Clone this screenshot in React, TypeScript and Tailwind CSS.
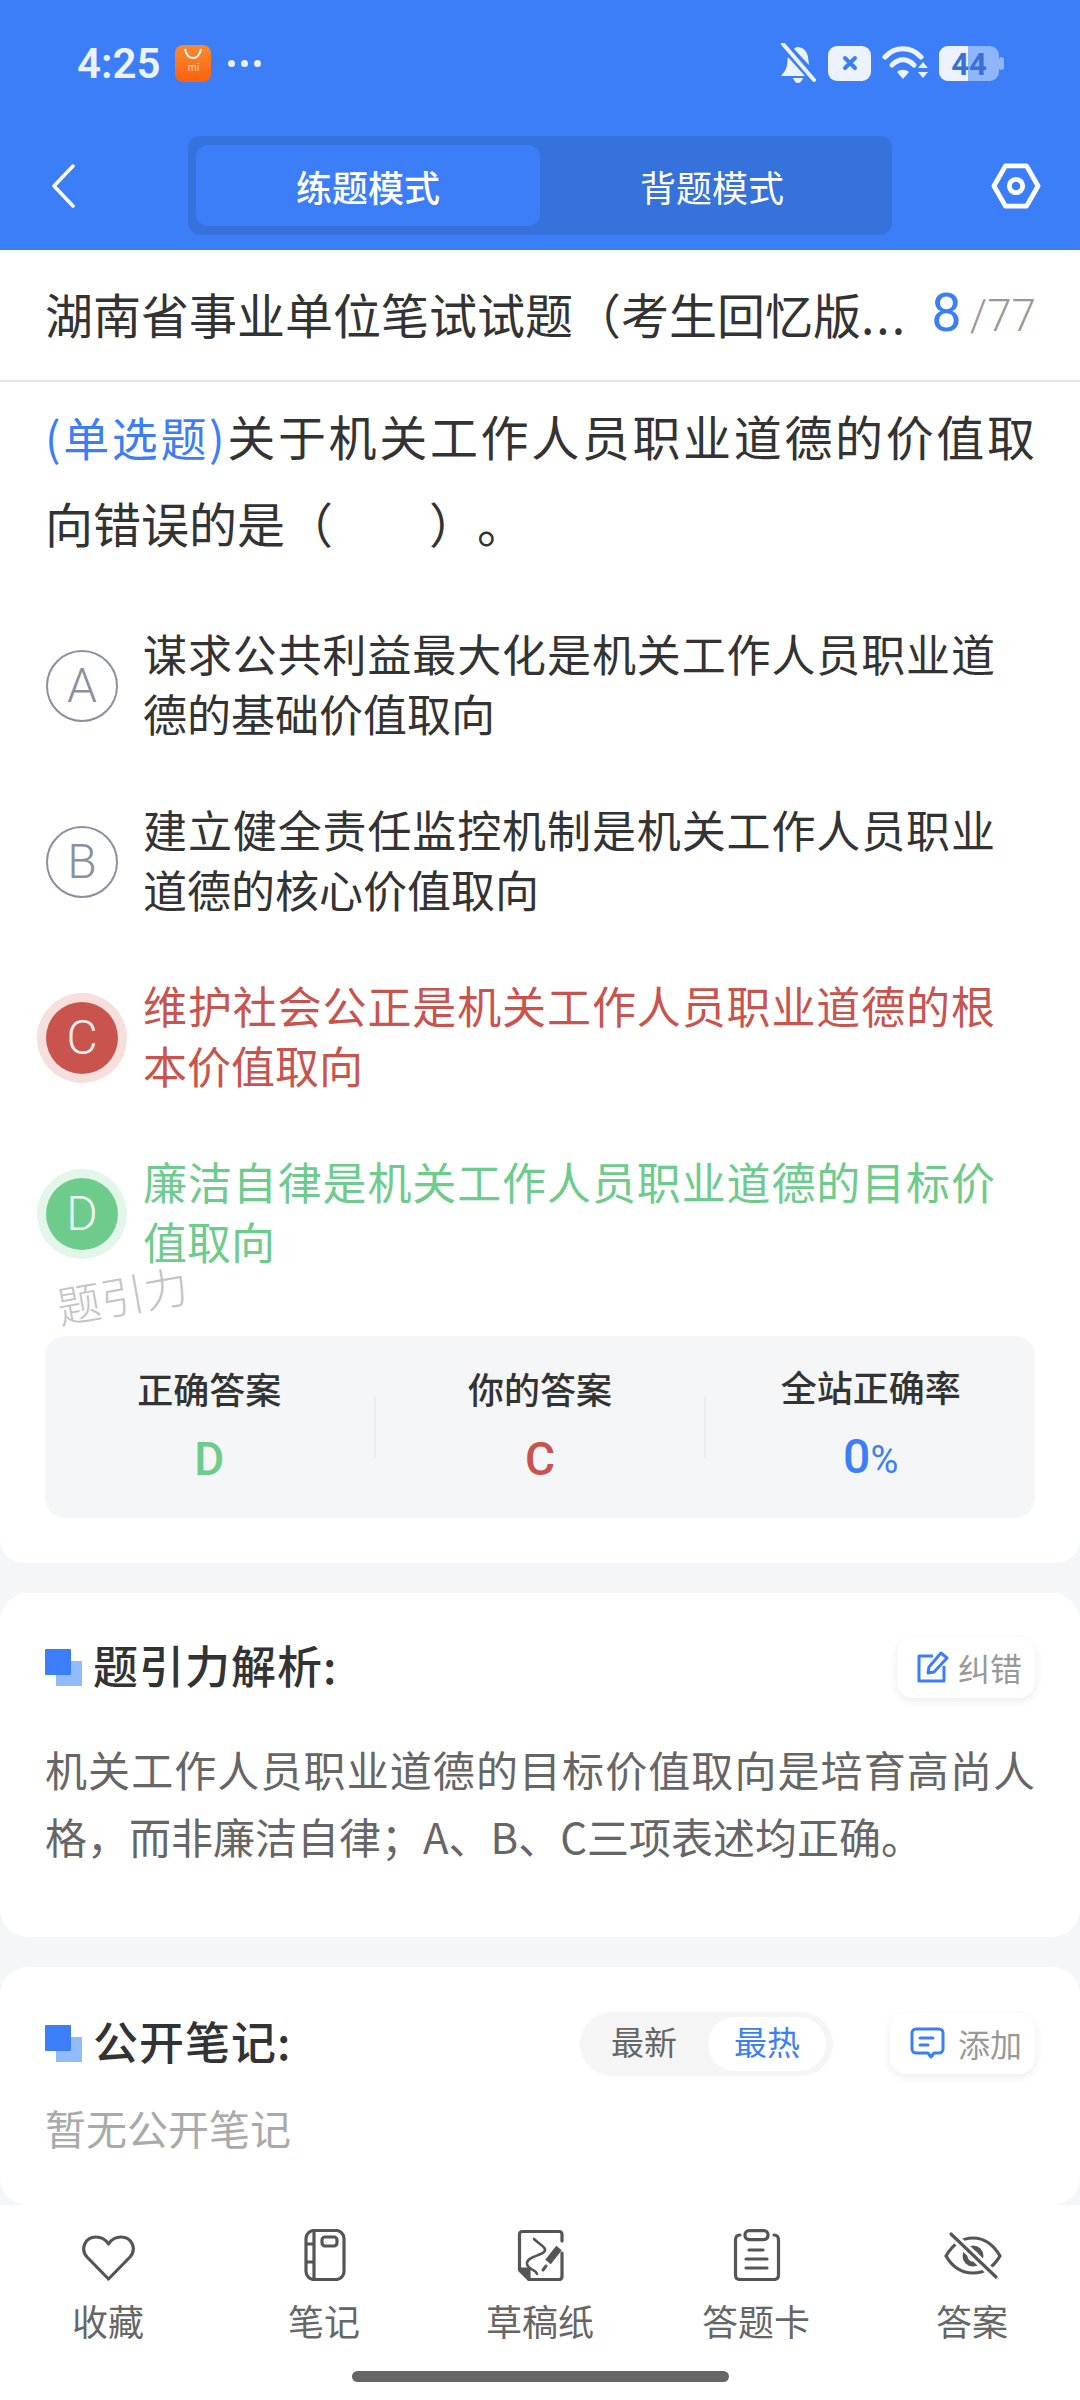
const optionRows = [
  { letter: "A", lines: "谋求公共利益最大化是机关工作人员职业道德的基础价值取向", state: "idle" },
  { letter: "B", lines: "建立健全责任监控机制是机关工作人员职业道德的核心价值取向", state: "idle" },
  { letter: "C", lines: "维护社会公正是机关工作人员职业道德的根本价值取向", state: "wrong" },
  { letter: "D", lines: "廉洁自律是机关工作人员职业道德的目标价值取向", state: "right" },
] as const;

function SectionMark() {
  return (
    <svg width="37" height="37" viewBox="0 0 37 37" className="shrink-0">
      <rect x="11" y="12" width="26" height="25" fill="#90bcfb" />
      <rect x="0" y="0" width="26" height="26" rx="1" fill="#3b7ef8" />
    </svg>
  );
}

function BellOffIcon() {
  return (
    <svg width="38" height="40" viewBox="0 0 38 40" fill="#ecf2ff">
      <path d="M18 4c6 0 10 4 11 10l1 8-15-16c1-1 2-2 3-2zM9 14l17 19H2c2-3 5-5 6-11z" />
      <path d="M14 35h10c-1 3-3 5-5 5s-4-2-5-5z" />
      <path d="M4 1l31 36" stroke="#ecf2ff" strokeWidth="4" strokeLinecap="round" />
    </svg>
  );
}

function WifiIcon() {
  return (
    <svg width="46" height="36" viewBox="0 0 46 36" fill="none" stroke="#ecf2ff" strokeWidth="5" strokeLinecap="round">
      <path d="M3 12C13 1 29 1 39 12" />
      <path d="M10 20c7-7 15-7 22 0" />
      <path d="M15 27l6 7 6-7c-3-3-9-3-12 0z" fill="#ecf2ff" stroke="none" />
      <path d="M36 23l5-6 5 6zM36 27l5 6 5-6z" fill="#ecf2ff" stroke="none" />
    </svg>
  );
}

function BatteryIcon() {
  return (
    <svg width="65" height="35" viewBox="0 0 65 35">
      <rect x="0" y="0" width="60" height="35" rx="9" fill="#8fb5fb" />
      <rect x="60" y="11" width="5" height="13" rx="2.5" fill="#8fb5fb" />
      <path d="M9 0h20v35H9a9 9 0 0 1-9-9V9a9 9 0 0 1 9-9z" fill="#ecf2ff" />
      <text x="30" y="29" textAnchor="middle" fontSize="31" fontWeight="700" fontFamily="Roboto, sans-serif" fill="#3a70d6">
        44
      </text>
    </svg>
  );
}

function EditIcon() {
  return (
    <svg width="32" height="32" viewBox="0 0 32 32" fill="none" stroke="#3b7ef8" strokeWidth="3" strokeLinejoin="round">
      <path d="M16 5H2v25h25V15" />
      <path d="M11 22l1-6L24 2l6 5-13 14z" />
    </svg>
  );
}

function CommentIcon() {
  return (
    <svg width="35" height="32" viewBox="0 0 35 32" fill="none" stroke="#3b7ef8" strokeWidth="3" strokeLinecap="round" strokeLinejoin="round">
      <path d="M6 2h23a4 4 0 0 1 4 4v16a4 4 0 0 1-4 4h-5l-3 4-3-4H6a4 4 0 0 1-4-4V6a4 4 0 0 1 4-4z" />
      <path d="M10 11h13M10 18h8" />
    </svg>
  );
}

function HeartIcon() {
  return (
    <svg width="60" height="52" viewBox="0 0 60 52" fill="none" stroke="#555" strokeWidth="3.2" strokeLinejoin="round">
      <path d="M30.5 50L9 28C2 20 7 8 18 8c6 0 10 3 12.500 7C33 11 37 8 43 8c11 0 16 12 9 20z" />
    </svg>
  );
}

function NotebookIcon() {
  return (
    <svg width="60" height="52" viewBox="0 0 60 52" fill="none" stroke="#555" strokeWidth="3.2">
      <rect x="12" y="1.500" width="38" height="49" rx="8" />
      <path d="M20 2v48M12 15h8M12 33h8" />
      <rect x="28" y="8" width="15" height="9" rx="3" />
    </svg>
  );
}

function DraftIcon() {
  return (
    <svg width="60" height="52" viewBox="0 0 60 52" fill="none" stroke="#555" strokeWidth="3.2" strokeLinejoin="round" strokeLinecap="round">
      <path d="M52 24v23q0 3.500-3 3.500H19L9.500 41V5.500q0-3 3-3H49q3 0 3 3V12" />
      <path d="M10 40h9v10z" fill="#555" />
      <path d="M24 10c6 6 14 9 10 13s-18 5-17 12c1 6 9 5 10 10" strokeWidth="2.600" />
      <path d="M49 19L38 33" strokeWidth="7" strokeLinecap="butt" />
      <path d="M36 37l-3 4" strokeWidth="3" />
    </svg>
  );
}

function ClipboardIcon() {
  return (
    <svg width="60" height="52" viewBox="0 0 60 52" fill="none" stroke="#555" strokeWidth="3.2" strokeLinecap="round">
      <path d="M14 6q-4.500 0-4.500 5v35q0 4.500 4.500 4.500h34q4.500 0 4.500-4.500V11q0-5-4.500-5" />
      <rect x="19" y="1.600" width="23" height="9" rx="4" />
      <path d="M23 21h14M20 30h21M20 39h21" />
    </svg>
  );
}

function EyeOffIcon() {
  return (
    <svg width="60" height="52" viewBox="0 0 60 52" fill="none" stroke="#555" strokeWidth="3.2" strokeLinecap="round">
      <path d="M4 27C11 15 21 9 31 9s20 6 27 18c-7 12-17 17-27 17S11 39 4 27z" />
      <circle cx="31" cy="27" r="8" strokeWidth="5" />
      <path d="M9 5l45 43" stroke="#fff" strokeWidth="9" />
      <path d="M9 5l45 43" />
    </svg>
  );
}

const bottomTabs = [
  { label: "收藏", icon: <HeartIcon /> },
  { label: "笔记", icon: <NotebookIcon /> },
  { label: "草稿纸", icon: <DraftIcon /> },
  { label: "答题卡", icon: <ClipboardIcon /> },
  { label: "答案", icon: <EyeOffIcon /> },
];

function OptionRow({ letter, lines, state }: (typeof optionRows)[number]) {
  const circleClass =
    state === "wrong"
      ? "bg-[#c9534d] text-[#fbeeee] ring-[9px] ring-[#f7dfdd]"
      : state === "right"
        ? "bg-[#6dcb8c] text-[#eefbf2] ring-[9px] ring-[#e3f6ea]"
        : "border-2 border-[#8b8fa0] text-[#8b8fa0]";
  const textClass =
    state === "wrong" ? "text-[#c9534d]" : state === "right" ? "text-[#6dcb8c]" : "text-[#333]";

  return (
    <div className="flex h-[120px] items-center gap-[25px]">
      <div
        className={`flex h-[72px] w-[72px] shrink-0 items-center justify-center rounded-full font-['Roboto',sans-serif] text-[48px] font-light ${circleClass}`}
      >
        {letter}
      </div>
      <p className={`-mt-[6px] w-[852px] text-justify text-[44px] leading-[60px] ${textClass}`}>{lines}</p>
    </div>
  );
}

export default function App() {
  return (
    <div className="h-[2400px] w-[1080px] overflow-hidden bg-[#f4f6f8] font-['Noto_Sans_CJK_SC','Noto_Sans',sans-serif] text-[#333]">
      <header className="h-[250px] bg-[#3b7ef8]">
        <div className="flex h-[126px] items-center justify-between pl-[77px] pr-[76px]">
          <div className="flex items-center gap-[15px]">
            <span className="font-['Roboto',sans-serif] text-[42px] font-semibold text-[#ecf2ff]">4:25</span>
            <div className="flex h-[37px] w-[36px] flex-col items-center rounded-[8px] bg-gradient-to-b from-[#fb8a2e] to-[#fb5f0c]">
              <svg width="20" height="12" viewBox="0 0 20 12" fill="none" className="mt-[3px]">
                <path d="M2 1c2 12 14 12 16 0" stroke="#fff" strokeWidth="2" />
              </svg>
              <span className="mt-[1px] text-[10px] leading-[12px] text-[#ffd9bd]">mi</span>
            </div>
            <div className="ml-[2px] flex gap-[6px]">
              <span className="h-[7px] w-[7px] rounded-full bg-[#ecf2ff]" />
              <span className="h-[7px] w-[7px] rounded-full bg-[#ecf2ff]" />
              <span className="h-[7px] w-[7px] rounded-full bg-[#ecf2ff]" />
            </div>
          </div>
          <div className="flex items-center gap-[11px]">
            <BellOffIcon />
            <div className="flex h-[35px] w-[43px] items-center justify-center rounded-[9px] bg-[#ecf2ff]">
              <svg width="18" height="18" viewBox="0 0 18 18" stroke="#3b7ef8" strokeWidth="4" strokeLinecap="round">
                <path d="M4 4l10 10M14 4L4 14" />
              </svg>
            </div>
            <WifiIcon />
            <BatteryIcon />
          </div>
        </div>

        <div className="flex h-[124px] items-center pb-[5px] pl-[50px] pr-[39px]">
          <svg width="26" height="44" viewBox="0 0 26 44" fill="none" stroke="#fff" strokeWidth="3.500" strokeLinecap="round" strokeLinejoin="round">
            <path d="M23 2L4 22l19 20" />
          </svg>
          <div className="ml-[112px] flex h-[99px] w-[704px] items-center rounded-[12px] bg-[#3672dc] pl-[8px] text-[36px] font-medium text-white">
            <div className="flex h-[81px] w-[344px] items-center justify-center rounded-[12px] bg-[#3b7ef8]">练题模式</div>
            <div className="flex h-[81px] w-[344px] items-center justify-center font-normal">背题模式</div>
          </div>
          <svg width="50" height="46" viewBox="0 0 52 48" fill="none" stroke="#fff" strokeWidth="5" strokeLinejoin="round" className="ml-auto">
            <path d="M15 3h22l12 21-12 21H15L3 24z" />
            <circle cx="26" cy="24" r="7" />
          </svg>
        </div>
      </header>

      <section className="rounded-b-[24px] bg-white pb-[45px]">
        <div className="flex h-[132px] items-center justify-between border-b-2 border-[#e5e5e5] pb-[5px] pl-[45px] pr-[44px]">
          <span className="whitespace-nowrap text-[48px] text-[#333]">
            湖南省事业单位笔试试题（考生回忆版<span className="tracking-[2px]">...</span>
          </span>
          <span className="flex items-baseline whitespace-nowrap">
            <span className="font-['Roboto',sans-serif] text-[54px] text-[#3b7ef8]">8</span>
            <span className="ml-[8px] font-['Roboto',sans-serif] text-[44px] font-light text-[#999]">/77</span>
          </span>
        </div>

        <div className="px-[45px] pt-[10px]">
          <p className="text-[48px] leading-[87px] [text-spacing-trim:space-all]">
            <span className="block text-justify [text-align-last:justify]">
              <span className="text-[46px] leading-none text-[#3b7ef8]">(单选题)</span>
              关于机关工作人员职业道德的价值取
            </span>
            <span className="block">向错误的是（{"\u3000\u3000"}）。</span>
          </p>
        </div>

        <div className="relative mt-[60px] pl-[46px]">
          <div className="flex flex-col gap-[56px]">
            {optionRows.map((option) => (
              <OptionRow key={option.letter} {...option} />
            ))}
          </div>
          <span className="absolute left-[56px] top-[640px] -rotate-[10deg] text-[44px] font-light leading-[56px] text-[#c4c4c4]">
            题引力
          </span>
        </div>

        <div className="mx-[45px] mt-[62px] flex h-[182px] items-center rounded-[20px] bg-[#f4f6f8]">
          <div className="flex flex-1 flex-col items-center gap-[21px] pb-[8px]">
            <span className="text-[36px] font-medium leading-[50px]">正确答案</span>
            <span className="font-['Roboto',sans-serif] text-[46px] font-medium leading-[50px] text-[#6dcb8c]">D</span>
          </div>
          <div className="h-[62px] w-[2px] bg-[#ebedef]" />
          <div className="flex flex-1 flex-col items-center gap-[21px] pb-[8px]">
            <span className="text-[36px] font-medium leading-[50px]">你的答案</span>
            <span className="font-['Roboto',sans-serif] text-[46px] font-medium leading-[50px] text-[#c9534d]">C</span>
          </div>
          <div className="h-[62px] w-[2px] bg-[#ebedef]" />
          <div className="flex flex-1 flex-col items-center gap-[21px] pb-[8px]">
            <span className="text-[36px] font-medium leading-[50px]">全站正确率</span>
            <span className="font-['Roboto',sans-serif] text-[48px] font-medium leading-[50px] text-[#3b7ef8]">
              0<span className="text-[38px] font-normal">%</span>
            </span>
          </div>
        </div>
      </section>

      <section className="mt-[30px] rounded-[28px] bg-white pb-[68px] pl-[45px] pr-[45px] pt-[44px]">
        <div className="flex h-[61px] items-center justify-between">
          <div className="flex items-center gap-[11px]">
            <SectionMark />
            <h2 className="pb-[5px] text-[45px] font-medium tracking-[1px]">题引力解析:</h2>
          </div>
          <button className="flex h-[61px] w-[138px] items-center justify-end gap-[9px] rounded-[16px] bg-white pb-[2px] pr-[13px] text-[32px] text-[#999] shadow-[0_3px_10px_rgba(0,0,0,0.08)]">
            <EditIcon />
            纠错
          </button>
        </div>
        <p className="mt-[37px] text-justify text-[42px] leading-[67px] text-[#666]">
          机关工作人员职业道德的目标价值取向是培育高尚人格，而非廉洁自律；A、B、C三项表述均正确。
        </p>
      </section>

      <section className="mt-[30px] h-[238px] rounded-[28px] bg-white pl-[45px] pr-[45px] pt-[46px]">
        <div className="flex h-[61px] items-center">
          <SectionMark />
          <h2 className="ml-[11px] pb-[5px] text-[45px] font-medium tracking-[1px]">公开笔记:</h2>
          <div className="ml-auto flex h-[64px] w-[253px] items-center rounded-full bg-[#f5f5f5] text-[33px]">
            <span className="w-[128px] pb-[3px] text-center text-[#666]">最新</span>
            <span className="flex h-[54px] w-[118px] items-center justify-center rounded-full bg-white pb-[3px] text-[#3b7ef8]">最热</span>
          </div>
          <button className="ml-[57px] flex h-[61px] w-[145px] items-center justify-end gap-[13px] rounded-[16px] bg-white pb-[2px] pr-[13px] text-[32px] text-[#999] shadow-[0_3px_10px_rgba(0,0,0,0.08)]">
            <CommentIcon />
            添加
          </button>
        </div>
        <p className="mt-[23px] text-[41px] leading-[60px] text-[#aaa]">暂无公开笔记</p>
      </section>

      <nav className="h-[195px] bg-white pt-[24px]">
        <div className="grid grid-cols-5">
          {bottomTabs.map((tab) => (
            <div key={tab.label} className="flex flex-col items-center">
              {tab.icon}
              <span className="mt-[19px] text-[36px] leading-[40px] text-[#666]">{tab.label}</span>
            </div>
          ))}
        </div>
        <div className="mx-auto mt-[31px] h-[11px] w-[377px] rounded-full bg-[#666]" />
      </nav>
    </div>
  );
}
